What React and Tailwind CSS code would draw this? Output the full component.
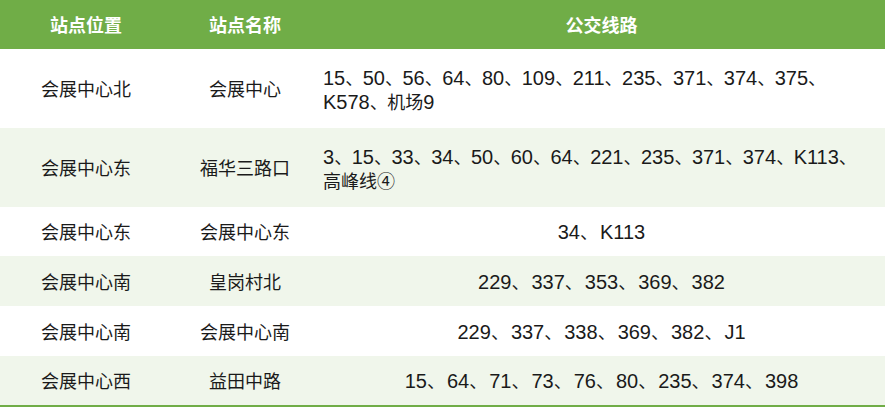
const rows = [
  {
    place: "会展中心北",
    name: "会展中心",
    lines: ["15、50、56、64、80、109、211、235、371、374、375、", "K578、机场9"],
    h: "h-[79px]",
    alt: false,
  },
  {
    place: "会展中心东",
    name: "福华三路口",
    lines: ["3、15、33、34、50、60、64、221、235、371、374、K113、", "高峰线④"],
    h: "h-[79px]",
    alt: true,
  },
  { place: "会展中心东", name: "会展中心东", lines: ["34、K113"], h: "h-[49px]", alt: false },
  { place: "会展中心南", name: "皇岗村北", lines: ["229、337、353、369、382"], h: "h-[50px]", alt: true },
  { place: "会展中心南", name: "会展中心南", lines: ["229、337、338、369、382、J1"], h: "h-[50px]", alt: false },
  { place: "会展中心西", name: "益田中路", lines: ["15、64、71、73、76、80、235、374、398"], h: "h-[49px]", alt: true },
];

// split a route string so latin runs use the wider latin face
const Route = ({ text, wide }) => {
  const parts = text.split(/([0-9A-Za-z]+|、)/).filter(Boolean);
  return (
    <span className="whitespace-nowrap leading-[24px]">
      {parts.map((p, i) => {
        if (p === "、")
          return (
            <span key={i} className={`inline-block text-[18px] ${wide ? "w-[20px]" : "w-[17.5px]"}`}>
              、
            </span>
          );
        if (/^[0-9A-Za-z]+$/.test(p))
          return (
            <span key={i} className="font-['Liberation_Sans',sans-serif] text-[20px]">
              {p}
            </span>
          );
        return (
          <span key={i} className="text-[18px]">
            {p}
          </span>
        );
      })}
    </span>
  );
};

const App = () => {
  return (
    <div
      className="w-[885px] h-[407px] bg-white text-[#1a1a1a]"
      style={{ fontFamily: '"Noto Sans CJK SC", "Noto Sans", sans-serif' }}
    >
      {/* Header */}
      <div className="grid grid-cols-[172px_146px_1fr] h-[49px] bg-[#70ad47] text-white font-bold text-[18px]">
        <div className="flex items-center justify-center">站点位置</div>
        <div className="flex items-center justify-center">站点名称</div>
        <div className="flex items-center justify-center">公交线路</div>
      </div>

      {/* Body */}
      {rows.map((r, i) => (
        <div
          key={i}
          className={`grid grid-cols-[172px_146px_1fr] text-[18px] ${r.h} ${r.alt ? "bg-[#f0f6eb]" : "bg-white"}`}
        >
          <div className="flex items-center justify-center">{r.place}</div>
          <div className="flex items-center justify-center">{r.name}</div>
          {r.lines.length > 1 ? (
            <div className="flex flex-col justify-center pl-[5px] leading-[24px]">
              {r.lines.map((l, j) => (
                <div key={j} className="h-[24px]">
                  <Route text={l} />
                </div>
              ))}
            </div>
          ) : (
            <div className="flex items-center justify-center">
              <Route text={r.lines[0]} wide />
            </div>
          )}
        </div>
      ))}
      <div className="h-[2px] bg-[#70ad47]" />
    </div>
  );
};

export default App;
